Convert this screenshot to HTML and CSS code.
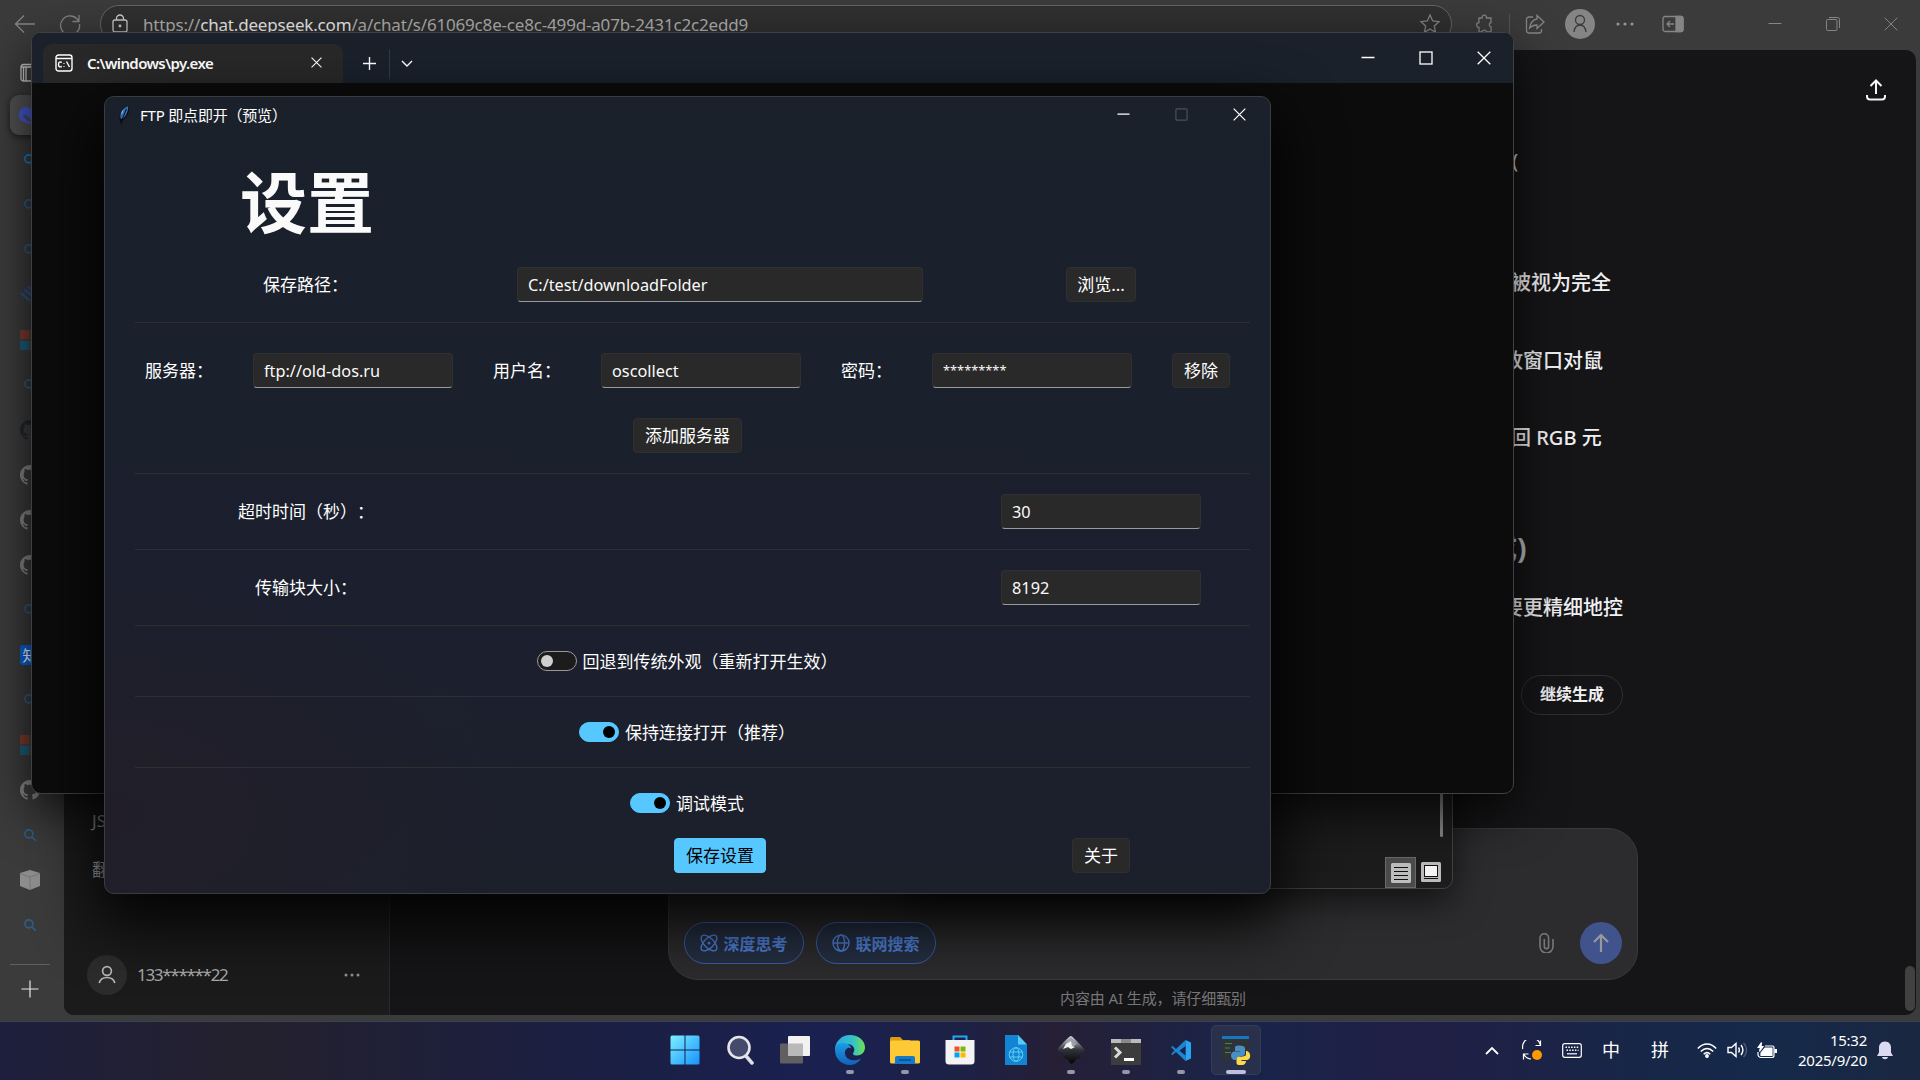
FILE: index.html
```html
<!DOCTYPE html>
<html lang="zh-CN">
<head>
    <meta charset="UTF-8">
    <title>FTP 即点即开（预览）</title>
    <link rel="stylesheet" href="styles.css">
</head>
<body>
    <!-- shared icons -->
    <svg class="defs">
        <symbol id="search" viewBox="0 0 16 16"><circle cx="6.7" cy="6.7" r="4.6"/><path d="M10 10l4.6 4.6"/></symbol>
        <symbol id="github" viewBox="0 0 16 16"><path d="M8 0C3.58 0 0 3.58 0 8c0 3.54 2.29 6.53 5.47 7.59.4.07.55-.17.55-.38 0-.19-.01-.82-.01-1.49-2.01.37-2.53-.49-2.69-.94-.09-.23-.48-.94-.82-1.13-.28-.15-.68-.52-.01-.53.63-.01 1.08.58 1.23.82.72 1.21 1.87.87 2.33.66.07-.52.28-.87.51-1.07-1.78-.2-3.64-.89-3.64-3.95 0-.87.31-1.59.82-2.15-.08-.2-.36-1.02.08-2.12 0 0 .67-.21 2.2.82.64-.18 1.32-.27 2-.27s1.36.09 2 .27c1.53-1.04 2.2-.82 2.2-.82.44 1.1.16 1.92.08 2.12.51.56.82 1.27.82 2.15 0 3.07-1.87 3.75-3.65 3.95.29.25.54.73.54 1.48 0 1.07-.01 1.93-.01 2.2 0 .21.15.46.55.38A8 8 0 0 0 16 8c0-4.42-3.58-8-8-8z"/></symbol>
        <symbol id="squares" viewBox="0 0 20 20"><path fill="#7d3a2c" d="M0 0h9.4v9.4H0z"/><path fill="#4e6a2c" d="M10.6 0H20v9.4h-9.4z"/><path fill="#1d5d7a" d="M0 10.6h9.4V20H0z"/><path fill="#8a6a20" d="M10.6 10.6H20V20h-9.4z"/></symbol>
        <symbol id="close" viewBox="0 0 14 14"><path d="M.7.7l12.6 12.6M13.3.7L.7 13.3"/></symbol>
        <symbol id="dash" viewBox="0 0 14 14"><path d="M.5 6.5h13"/></symbol>
        <symbol id="person" viewBox="0 0 20 20"><circle cx="10" cy="6" r="4.4"/><path d="M2.2 18c1-4 4-5.500 7.800-5.500s6.800 1.500 7.800 5.500"/></symbol>
    </svg>

    <div class="desktop">
        <div class="browser">
            <div class="toolbar">
                <svg class="line" width="22" height="20" viewBox="0 0 22 20"><path d="M21 10H1.500M10 1.500L1.500 10l8.500 8.500"/></svg>
                <svg class="line" width="22" height="22" viewBox="0 0 22 22"><path d="M19.500 8A9.500 9.500 0 1 0 20.500 11M20 2v6.500h-6.500"/></svg>
                <div class="address">
                    <svg class="line lock" width="18" height="20" viewBox="0 0 18 20"><rect x="2" y="6" width="14" height="12" rx="2"/><path d="M5.500 6V4.500a3.500 3.500 0 0 1 7 0V6"/><circle cx="9" cy="12" r=".8"/></svg>
                    <span class="url">https://<b>chat.deepseek.com</b>/a/chat/s/61069c8e-ce8c-499d-a07b-2431c2c2edd9</span>
                    <svg class="line star" width="22" height="22" viewBox="0 0 22 22"><path d="M11 2l2.700 6 6.300.700-4.700 4.300 1.300 6.400L11 16l-5.600 3.400L6.700 13 2 8.700 8.300 8z"/></svg>
                </div>
                <svg class="line" width="20" height="20" viewBox="0 0 20 20"><path d="M5 4h3a2.300 2.300 0 1 1 4.500 0H17v4.500a2.200 2.200 0 0 0 0 4.300V18h-4.500a2.300 2.300 0 0 0-4.500 0H5v-4.500a2.400 2.400 0 1 1 0-4.800z"/></svg>
                <i class="divider"></i>
                <svg class="line" width="20" height="20" viewBox="0 0 20 20"><path d="M8 3H4a2.500 2.500 0 0 0-2.500 2.500v11A2.500 2.500 0 0 0 4 19h10a2.500 2.500 0 0 0 2.500-2.500V15M12 1.500L19 8l-7 6.500V11c-3 0-5 .500-7.500 3C5 9.500 8 5.500 12 5z"/></svg>
                <div class="profile"><svg class="line" width="20" height="20" viewBox="0 0 20 20"><circle cx="10" cy="6" r="4.500"/><path d="M4 18c.500-4 2.500-7 6-7s5.500 3 6 7"/></svg></div>
                <svg class="dots" width="18" height="4" viewBox="0 0 18 4"><circle cx="2" cy="2" r="1.600"/><circle cx="9" cy="2" r="1.600"/><circle cx="16" cy="2" r="1.600"/></svg>
                <svg class="line" width="22" height="18" viewBox="0 0 22 18"><rect x="1" y="1.500" width="20" height="15" rx="2"/><path class="solid" d="M14 1.500h5a2 2 0 0 1 2 2v11a2 2 0 0 1-2 2h-5z"/><path d="M12 9H5M8 6L5 9l3 3"/></svg>
                <i></i>
                <svg class="line thin" width="14" height="14"><use href="#dash"/></svg>
                <svg class="line thin" width="14" height="14" viewBox="0 0 14 14"><rect x=".5" y="2.500" width="10.500" height="11" rx="1"/><path d="M3 .500h8.500a2 2 0 0 1 2 2V11"/></svg>
                <svg class="line thin" width="14" height="14"><use href="#close"/></svg>
            </div>

            <div class="page">
                <div class="tabs">
                    <div class="tab first"><svg class="line panes" width="20" height="20" viewBox="0 0 20 20"><rect x="1" y="1.500" width="18" height="16.500" rx="2.500"/><path d="M6 4v14M1 4h18M3.500 4v14"/></svg></div>
                    <div class="tab active"><svg width="22" height="20" viewBox="0 0 22 20"><path fill="#4158d6" d="M0 10c0-5 3-8 7-8 2 0 3 1 4 2V2c3 2 4 4 6 4 1-2 3-1 5-2-1 4-3 5-4 8-2 6-8 8-12 5-4 0-6-3-6-7z"/><path fill="#4b4b55" d="M4 10c3-1 5 1 6.500 3.500 1 1.500 2 2 3 2.500-4 1-6.500-.500-8-3C5 12 4 11 4 10z"/></svg></div>
                    <div class="tab"><svg class="find bright" width="14" height="14"><use href="#search"/></svg></div>
                    <div class="tab"><svg class="find" width="14" height="14"><use href="#search"/></svg></div>
                    <div class="tab"><svg class="find" width="14" height="14"><use href="#search"/></svg></div>
                    <div class="tab"><svg class="find stripes" width="20" height="20" viewBox="0 0 20 20"><path d="M1 8l9 8M4.500 4.500l9 8M8 1.500l8 7"/></svg></div>
                    <div class="tab"><svg width="20" height="20"><use href="#squares"/></svg></div>
                    <div class="tab"><svg class="find" width="14" height="14"><use href="#search"/></svg></div>
                    <div class="tab"><svg class="cat dark" width="20" height="20"><use href="#github"/></svg></div>
                    <div class="tab"><svg class="cat" width="20" height="20"><use href="#github"/></svg></div>
                    <div class="tab"><svg class="cat" width="20" height="20"><use href="#github"/></svg></div>
                    <div class="tab"><svg class="cat" width="20" height="20"><use href="#github"/></svg></div>
                    <div class="tab"><svg class="find" width="14" height="14"><use href="#search"/></svg></div>
                    <div class="tab"><span class="zhihu">知</span></div>
                    <div class="tab"><svg class="find" width="14" height="14"><use href="#search"/></svg></div>
                    <div class="tab"><svg width="20" height="20"><use href="#squares"/></svg></div>
                    <div class="tab"><svg class="cat" width="20" height="20"><use href="#github"/></svg></div>
                    <div class="tab"><svg class="find" width="14" height="14"><use href="#search"/></svg></div>
                    <div class="tab"><svg width="20" height="20" viewBox="0 0 20 20"><path fill="#8d8d8d" d="M10 0l10 3v13l-10 4L0 16V3z"/><path d="M0 3.500l10 3.500 10-3.500M10 7v13" fill="none" stroke="#777"/></svg></div>
                    <div class="tab"><svg class="find" width="14" height="14"><use href="#search"/></svg></div>
                    <div class="new-tab"><svg width="18" height="18" viewBox="0 0 18 18"><path d="M9 .500v17M.500 9h17" stroke="#e8e8e8" stroke-width="1.200"/></svg></div>
                </div>

                <div class="site">
                    <div class="history">
                        <p>JSON</p>
                        <p>翻译</p>
                        <div class="account">
                            <span class="avatar"><svg class="line" width="20" height="20"><use href="#person"/></svg></span>
                            <span class="phone">133******22</span>
                            <svg class="dots" width="16" height="4" viewBox="0 0 16 4"><circle cx="2" cy="2" r="1.500"/><circle cx="8" cy="2" r="1.500"/><circle cx="14" cy="2" r="1.500"/></svg>
                        </div>
                    </div>
                    <div class="chat">
                        <svg class="upload" width="20" height="22" viewBox="0 0 20 22"><path d="M10 15V2M4.500 7L10 1.500 15.500 7M1 16v1.500a3 3 0 0 0 3 3h12a3 3 0 0 0 3-3V16"/></svg>
                        <div class="messages">
                            <p class="m1">(</p>
                            <p class="m2">被视为完全</p>
                            <p>放窗口对鼠</p>
                            <p class="m2">回 RGB 元</p>
                            <h3>成)</h3>
                            <p>要更精细地控</p>
                            <span class="continue">继续生成</span>
                        </div>
                        <div class="prompt">
                            <span class="pill"><svg width="18" height="18" viewBox="0 0 18 18"><ellipse cx="9" cy="9" rx="10" ry="4.800" transform="rotate(45 9 9)"/><ellipse cx="9" cy="9" rx="10" ry="4.800" transform="rotate(-45 9 9)"/><circle cx="9" cy="9" r=".8"/></svg>深度思考</span>
                            <span class="pill"><svg width="18" height="18" viewBox="0 0 18 18"><circle cx="9" cy="9" r="8"/><ellipse cx="9" cy="9" rx="3.600" ry="8"/><path d="M1 9h16"/></svg>联网搜索</span>
                            <svg class="clip" width="16" height="20" viewBox="0 0 16 20"><path d="M15 6v7.500a6.500 6.500 0 0 1-13 0V5a4.300 4.300 0 0 1 8.600 0v8.500a2.100 2.100 0 0 1-4.300 0V6"/></svg>
                            <span class="send"><svg width="18" height="20" viewBox="0 0 18 20"><path d="M9 19V2M2 9l7-7 7 7"/></svg></span>
                        </div>
                        <p class="note">内容由 AI 生成，请仔细甄别</p>
                        <i class="scrollbar"></i>
                    </div>
                </div>
            </div>
        </div>

        <!-- file manager behind the console -->
        <div class="window explorer">
            <i class="thumb"></i>
            <div class="views">
                <span class="view on"><svg width="20" height="20" viewBox="0 0 20 20"><rect width="20" height="20" rx="1.500" fill="#bdbdbd"/><path d="M3 4.500h14M3 8.500h14M3 12.500h14M3 16.500h14" stroke="#111"/></svg></span>
                <span class="view"><svg width="20" height="20" viewBox="0 0 20 20"><rect width="20" height="20" rx="1.500" fill="#bdb8bb"/><rect x="3.500" y="3.500" width="13" height="11" fill="#f4f4f4" stroke="#111"/><path d="M3 16.500h14" stroke="#111"/></svg></span>
            </div>
        </div>

        <div class="window console">
            <div class="console-bar">
                <div class="console-tab">
                    <svg width="18" height="18" viewBox="0 0 18 18"><rect x="1" y="1" width="16" height="16" rx="2.500"/><path d="M1 4.500h16M6.800 8.300C4.500 7.300 3.500 8.500 3.500 10.500s1 3 3.300 2M9 9v.8M9 12v.8M11.500 7.500l3 5.500"/></svg>
                    <span>C:\windows\py.exe</span>
                    <svg width="11" height="11"><use href="#close"/></svg>
                </div>
                <svg class="plus" width="13" height="13" viewBox="0 0 13 13"><path d="M6.500 0v13M0 6.500h13"/></svg>
                <i class="divider"></i>
                <svg class="chevron" width="12" height="7" viewBox="0 0 12 7"><path d="M1 1l5 5 5-5"/></svg>
                <div class="controls">
                    <svg width="14" height="14"><use href="#dash"/></svg>
                    <svg width="14" height="14" viewBox="0 0 14 14"><rect x="1" y="1" width="12" height="12"/></svg>
                    <svg width="14" height="14"><use href="#close"/></svg>
                </div>
            </div>
        </div>

        <div class="window settings">
            <div class="title-bar">
                <svg class="feather" width="14" height="20" viewBox="0 0 14 20"><path fill="#0b0d12" d="M4 20L2.500 13C2.500 7 6 2 12 0c1 5-.500 11-6 15z"/><path fill="#386db0" d="M3.500 13.500C2.500 7 6 3 11.300 1 11.500 6 9 11 5.500 14z"/><path d="M9.500 4L5 14.500" stroke="#0b0d12"/><path d="M6 5.500L4.500 9" stroke="#8db4df"/></svg>
                <span>FTP 即点即开（预览）</span>
                <div class="controls">
                    <svg width="13" height="13"><use href="#dash"/></svg>
                    <svg class="disabled" width="13" height="13" viewBox="0 0 14 14"><rect x="1" y="1" width="12" height="12" rx="1"/></svg>
                    <svg width="13" height="13"><use href="#close"/></svg>
                </div>
            </div>
            <div class="form">
                <h1>设置</h1>
                <div class="row path">
                    <label>保存路径：</label>
                    <input class="wide" type="text" value="C:/test/downloadFolder">
                    <button>浏览...</button>
                </div>
                <div class="row servers">
                    <div class="server">
                        <label>服务器：</label>
                        <input type="text" value="ftp://old-dos.ru">
                        <label>用户名：</label>
                        <input type="text" value="oscollect">
                        <label>密码：</label>
                        <input class="stars" type="text" value="*********">
                        <button>移除</button>
                    </div>
                    <button class="add">添加服务器</button>
                </div>
                <div class="row number">
                    <label>超时时间（秒）：</label>
                    <input type="text" value="30">
                </div>
                <div class="row number">
                    <label>传输块大小：</label>
                    <input type="text" value="8192">
                </div>
                <div class="row check"><i class="switch"></i><label>回退到传统外观（重新打开生效）</label></div>
                <div class="row check"><i class="switch on"></i><label>保持连接打开（推荐）</label></div>
                <div class="row check last"><i class="switch on"></i><label>调试模式</label></div>
                <div class="actions">
                    <button class="primary">保存设置</button>
                    <button>关于</button>
                </div>
            </div>
        </div>

        <div class="taskbar">
            <div class="apps">
                <div class="app"><svg width="30" height="30" viewBox="0 0 30 30"><defs><linearGradient id="win" x2="1" y2="1"><stop stop-color="#7df0ff"/><stop offset="1" stop-color="#1593ff"/></linearGradient></defs><path fill="url(#win)" d="M2 .500h12.500v14H.500V2A1.500 1.500 0 0 1 2 .500zM15.500 .500H28A1.500 1.500 0 0 1 29.500 2v12.500h-14zM.500 15.500h14v14H2A1.500 1.500 0 0 1 .500 28zM15.500 15.500h14V28a1.500 1.500 0 0 1-1.500 1.500H15.500z"/></svg></div>
                <div class="app"><svg width="30" height="30" viewBox="0 0 30 30"><circle cx="14" cy="12.500" r="10.500" fill="#454a6c" stroke="#e6e6ea" stroke-width="2.600"/><path d="M21 21l6 7" stroke="#e0e0e4" stroke-width="3.500" stroke-linecap="round"/></svg></div>
                <div class="app"><svg width="30" height="30" viewBox="0 0 30 30"><rect y="8.500" width="23" height="20" rx="1" fill="#606060"/><rect x="8" y="1" width="22" height="20" rx="1" fill="#f2f2f2"/><path d="M8 8.500h15V21H8z" fill="#b9b9b9"/></svg></div>
                <div class="app run"><svg width="30" height="30" viewBox="0 0 30 30"><defs><linearGradient id="eg" x2="1"><stop stop-color="#28a7e8"/><stop offset=".6" stop-color="#35c1c9"/><stop offset="1" stop-color="#6fe24c"/></linearGradient><linearGradient id="eb" x2="0" y2="1"><stop stop-color="#1b9de2"/><stop offset="1" stop-color="#1260b8"/></linearGradient></defs><path fill="url(#eg)" d="M0 15C0 6 7 0 15 0c9 0 15 6 15 12.500 0 5-4 8-8 8s-4.500-1.500-3.500-3c2.500-4-1-8.500-6-8.500C7 9 2 11 0 15z"/><path fill="url(#eb)" d="M0 15c0-5 5-8 11-6.500 3 .800 5 3 5.500 5-3-2-7 .500-6.500 5 .500 6 8 9 16 5C23 28 19 30 15 30 6.500 30 0 23.500 0 15z"/></svg></div>
                <div class="app run"><svg width="30" height="30" viewBox="0 0 30 30"><path fill="#dd9b11" d="M0 3.500A1.500 1.500 0 0 1 1.500 2H10l3 3h7v5H0z"/><rect y="5.500" width="30" height="23" rx="1.500" fill="#fdc934"/><path fill="#1579c8" d="M5 29v-6a2 2 0 0 1 2-2h16a2 2 0 0 1 2 2v6z"/><path d="M9 25h12" stroke="#0a4c8c" stroke-width="1.500"/></svg></div>
                <div class="app"><svg width="30" height="30" viewBox="0 0 30 30"><path d="M8.500 6V1.500h13V6" fill="none" stroke="#22a8f2" stroke-width="2"/><path fill="#f3f3f3" d="M.500 5h29v21a3.500 3.500 0 0 1-3.500 3.500H4A3.500 3.500 0 0 1 .500 26z"/><path fill="#f25022" d="M9.500 11.500h5v5h-5z"/><path fill="#7fba00" d="M15.500 11.500h5v5h-5z"/><path fill="#00a4ef" d="M9.500 17.500h5v5h-5z"/><path fill="#ffb900" d="M15.500 17.500h5v5h-5z"/></svg></div>
                <div class="app"><svg width="30" height="30" viewBox="0 0 30 30"><path fill="#1284d4" d="M4 0h13l9 9.500V30H4z"/><path fill="#56cbf5" d="M17 0l9 9.500h-9z"/><g fill="none" stroke="#62d0f5"><circle cx="15" cy="19.500" r="6.800"/><ellipse cx="15" cy="19.500" rx="3" ry="6.800"/><path d="M8.500 17h13M8.500 22h13"/></g></svg></div>
                <div class="app run"><svg width="30" height="30" viewBox="0 0 30 30"><defs><linearGradient id="ink" x2="0" y2="1"><stop stop-color="#d5d8dd"/><stop offset=".5" stop-color="#30343a"/><stop offset="1" stop-color="#050505"/></linearGradient></defs><path fill="url(#ink)" d="M15 1c1.500 0 12 11.500 13.500 13.500 1 3-5 3-6 5 0 2 3 2 2 3.500-2 1-4 0-5 2-1 2-2 3.500-4 3.500s-2-2.500-4-4-4-1-4.500-2.500c1-1.500 3-1 2-2.500-2-2-7-2-7.500-5C3 12 13 1 15 1z"/><path fill="#9ca0a8" d="M15 2.500l6 6.500-6 4-6-4z"/><path fill="#f1f1f1" d="M10 9l5-3 1 5 3 1-4 2-3-2-5 2z"/></svg></div>
                <div class="app run"><svg width="30" height="30" viewBox="0 0 30 30"><path fill="#3c3c3c" d="M0 7h30v24.500H0z"/><path fill="#bbb" d="M0 4h30v4H0z"/><path fill="#8a8a8a" d="M10 4h10v4H10z"/><path d="M4 12.500l5 5-5 5" fill="none" stroke="#d8d8d8" stroke-width="3"/><path fill="#fff" d="M13 23h10v3H13z"/></svg></div>
                <div class="app run"><svg width="30" height="30" viewBox="0 0 30 30"><path fill="#1d86d2" d="M19.500 5L10 14l-3.500-3L5 12l3.500 3.500L5 19l1.500 1 3.500-3 9.500 9z"/><path fill="#2aa3f0" d="M19.500 5L25 7.500v16L19.500 26z"/><path fill="#1a2049" d="M19.500 11v9.500L13.500 15.700z"/></svg></div>
                <div class="app run current"><svg width="30" height="30" viewBox="0 0 30 30"><path fill="#2f3337" d="M1 1h27v24H1z"/><path fill="#1477c0" d="M1 1h27v3H1z"/><path d="M4 8.500h7M4 13h5M4 17.500h6" stroke="#3e8c45"/><path fill="#4a8fc4" d="M14 12c1-2 9-2 10 1v6c0 3-8 1-9 6h-2c-4-1-4-8 0-8.500h6V16h-5z"/><path fill="#fbd94b" d="M25 16c5 0 5.500 8 1.500 9h-6v1h4.500c0 5.500-9 5.500-9.500 2V24c.500-4 8-1 9.500-4z"/></svg></div>
            </div>
            <div class="tray">
                <svg width="14" height="9" viewBox="0 0 14 9"><path stroke-width="1.800" d="M1 8l6-6 6 6"/></svg>
                <svg width="20" height="20" viewBox="0 0 20 20"><path d="M.800 9A9 9 0 0 1 18.500 5M18.500 .500V5.500h-5M1.500 19.500V14h5M2 14.500A9 9 0 0 0 9 19"/><circle cx="15" cy="15" r="5" fill="#f90" stroke="none"/></svg>
                <svg width="20" height="15" viewBox="0 0 20 15"><rect x=".700" y=".700" width="18.600" height="13.600" rx="2"/><path stroke-dasharray="1.500 1.300" stroke-width="1.500" d="M3.500 4.300h13M4.500 7.300h12"/><path d="M5 10.800h10"/></svg>
                <span class="ime">中</span>
                <span class="ime">拼</span>
                <svg width="20" height="15" viewBox="0 0 20 15"><path stroke-width="1.500" d="M.800 5.500c5.500-6 13-6 18.400 0M3.800 8.500c4-4 8.500-4 12.400 0M6.700 11.300c2-2 4.600-2 6.600 0"/><circle cx="10" cy="13" r="1.300" fill="#fff"/></svg>
                <svg width="20" height="16" viewBox="0 0 20 16"><path stroke-width="1.400" d="M1 5.500h3.500L9 1.500v13l-4.500-4H1zM11.500 5.500c1 1.500 1 3.500 0 5M14 3c2.300 3 2.300 7 0 10"/><path stroke="#56607a" d="M16.500 1c4 4 4 10 0 14"/></svg>
                <svg width="20" height="17" viewBox="0 0 20 17"><path d="M8 4h7.500A1.500 1.500 0 0 1 17 5.500v8a2 2 0 0 1-2 2H4a3 3 0 0 1-3-3V10"/><path fill="#fff" d="M8 6h7v7.500H4V11zM4.500 .500L1 5.500h2.500L2.500 9.500 6 4.500H4zM18 7.500h1.500v3H18z"/></svg>
                <div class="clock">15:32<br>2025/9/20</div>
                <svg class="bell" width="16" height="19" viewBox="0 0 16 19"><path d="M8 .500c4 0 6 3 6 6v5l2 3.500H0l2-3.500v-5c0-3 2-6 6-6zM5 16h6c-.500 3-5.500 3-6 0z"/></svg>
            </div>
        </div>
    </div>
</body>
</html>
```

FILE: styles.css
```css
*{
    box-sizing: border-box;
}
body{
    margin: 0;
    overflow: hidden;
    background: #151517;
    color: #fff;
    font-family: "Noto Sans", "Noto Sans CJK SC", sans-serif;
    text-spacing-trim: space-all;
}
p, h1, h3{
    margin: 0;
}
svg{
    fill: none;
    flex-shrink: 0;
}
.defs{
    display: none;
}
.desktop{
    position: relative;
    width: 1920px;
    height: 1080px;
    display: flex;
    flex-direction: column;
}

/* browser */
.browser{
    height: 1021px;
    background: #3b3b3b;
    display: flex;
    flex-direction: column;
}
.toolbar{
    height: 50px;
    padding-bottom: 2px;
    display: grid;
    grid-template-columns: 50px 40px 10px 1352px 7px 50px 1px 50px 40px 50px 46px 50px 58px 58px 58px;
    align-items: center;
    justify-items: center;
}
.toolbar .address{
    grid-column: 4;
}
.toolbar .address + svg{
    grid-column: 6;
}
.line{
    stroke: #858585;
    stroke-width: 1.3;
}
.line.thin{
    stroke-width: 1;
}
.line .solid{
    fill: #858585;
}
.dots{
    fill: #929292;
}
.address{
    width: 100%;
    height: 38px;
    align-self: start;
    margin-top: 5px;
    padding: 0 10px;
    border: 1px solid #656565;
    border-radius: 19px;
    background: #303030;
    display: flex;
    align-items: center;
    font-size: 17px;
}
.lock{
    stroke: #ccc;
}
.url{
    margin-left: 14px;
    color: #b1b1b1;
    letter-spacing: -.18px;
    white-space: nowrap;
}
.url b{
    font-weight: 400;
    color: #eee;
}
.star{
    margin-left: auto;
}
.toolbar .divider{
    width: 1px;
    height: 20px;
    background: #555;
}
.profile{
    width: 30px;
    height: 30px;
    border-radius: 50%;
    background: #858585;
    display: flex;
    align-items: center;
    justify-content: center;
}
.profile .line{
    stroke: #3c3c3c;
}
.page{
    flex: 1;
    display: flex;
    padding: 0 4px 6px 0;
}
.tabs{
    width: 64px;
    display: flex;
    flex-direction: column;
}
.tab{
    width: 60px;
    height: 45px;
    display: flex;
    align-items: center;
    justify-content: center;
}
.tab.first{
    height: 42px;
    padding-top: 3px;
}
.tab.active{
    position: relative;
    z-index: 0;
}
.tab.active::before{
    content: "";
    position: absolute;
    z-index: -1;
    inset: 3px 0 2px 10px;
    border-radius: 9px;
    background: #515151;
    box-shadow: 0 2px 6px #0008;
}
.panes{
    stroke: #c8c8c8;
}
.find{
    stroke: #2a5f8c;
    stroke-width: 1.8;
}
.find.bright{
    stroke: #1383dc;
}
.stripes{
    stroke: #2c5184;
    stroke-width: 2.5;
}
.cat{
    fill: #858585;
}
.cat.dark{
    fill: #22272d;
}
.zhihu{
    width: 20px;
    height: 20px;
    border-radius: 3px;
    background: #0961d8;
    text-align: center;
    font-size: 15px;
    line-height: 20px;
}
.new-tab{
    width: 40px;
    height: 50px;
    margin: 17px 0 0 10px;
    border-top: 1px solid #606060;
    text-align: center;
    line-height: 44px;
}
.new-tab svg{
    vertical-align: middle;
}
.site{
    flex: 1;
    display: flex;
    border-radius: 0 10px 10px 10px;
    overflow: hidden;
    background: #151517;
}
.history{
    width: 326px;
    padding: 747px 29px 0 28px;
    background: #1b1b1c;
    border-right: 1px solid #2a2a2c;
    font-size: 17px;
    line-height: 48px;
    color: #aaa;
}
.history p + p{
    margin-top: 1px;
}
.account{
    display: flex;
    align-items: center;
    margin: 61px 0 0 -5px;
    line-height: 40px;
}
.account .line{
    stroke: #b7b7b7;
    stroke-width: 1.7;
}
.avatar{
    width: 40px;
    height: 40px;
    margin-right: 10px;
    border-radius: 50%;
    background: #2c2c2d;
    display: flex;
    align-items: center;
    justify-content: center;
}
.phone{
    flex: 1;
    letter-spacing: -1.3px;
}
.chat{
    flex: 1;
    position: relative;
    display: flex;
    flex-direction: column;
    align-items: center;
}
.upload{
    position: absolute;
    top: 29px;
    right: 30px;
    stroke: #f4f4f4;
    stroke-width: 2;
}
.messages{
    align-self: stretch;
    height: 778px;
    padding: 97px 0 0 1113px;
    font-size: 20px;
    font-weight: 500;
    line-height: 28px;
    color: #f0f0f2;
}
.messages .m1{
    padding-left: 9px;
    margin-bottom: 94px;
    color: #ccc;
}
.messages p{
    margin-bottom: 49px;
}
.messages .m2{
    padding-left: 8px;
    margin-bottom: 50px;
}
.messages h3{
    margin: 79px 0 29px -14px;
    font-size: 28px;
    line-height: 34px;
    color: #bbb;
}
.continue{
    display: block;
    width: 102px;
    height: 40px;
    margin: 53px 0 0 18px;
    border: 1px solid #303032;
    border-radius: 20px;
    text-align: center;
    font-size: 16px;
    font-weight: 600;
    line-height: 37px;
}
.prompt{
    width: 970px;
    height: 152px;
    padding: 0 15px 15px;
    border: 1px solid #3a3a3c;
    border-radius: 30px;
    background: #2c2c2e;
    display: flex;
    align-items: flex-end;
}
.pill{
    width: 120px;
    height: 42px;
    margin-right: 12px;
    border: 1px solid #3d5fa8;
    border-radius: 21px;
    background: #252f42;
    color: #5081d8;
    font-size: 16px;
    font-weight: 600;
    display: flex;
    gap: 5px;
    align-items: center;
    justify-content: center;
}
.pill svg{
    stroke: #5081d8;
    stroke-width: 1.4;
}
.clip{
    margin: 0 26px 11px auto;
    stroke: #777;
    stroke-width: 1.6;
}
.send{
    width: 42px;
    height: 42px;
    border-radius: 50%;
    background: #40538c;
    stroke: #999;
    stroke-width: 2.2;
    display: flex;
    align-items: center;
    justify-content: center;
}
.note{
    margin-top: 7px;
    font-size: 15px;
    line-height: 22px;
    letter-spacing: -.1px;
    color: #777779;
}
.scrollbar{
    position: absolute;
    right: 1px;
    bottom: 4px;
    width: 10px;
    height: 45px;
    border-radius: 5px;
    background: #414141;
}

/* floating windows */
.window{
    position: absolute;
    overflow: hidden;
    border: 1px solid #3f4144;
    border-radius: 10px;
}
.explorer{
    left: 900px;
    top: 600px;
    width: 553px;
    height: 289px;
    background: #1c1c1c;
    box-shadow: 0 12px 35px #0009;
}
.thumb{
    position: absolute;
    right: 9px;
    top: 150px;
    width: 3px;
    height: 86px;
    border-radius: 2px;
    background: #888;
}
.views{
    position: absolute;
    right: 6px;
    bottom: 0;
    display: flex;
}
.view{
    width: 31px;
    height: 31px;
    display: flex;
    align-items: center;
    justify-content: center;
}
.view + .view{
    margin-left: -1px;
    padding-bottom: 1px;
}
.view.on{
    background: #4b4b4b;
    border: 1px solid #6a6a6a;
}
.console{
    left: 31px;
    top: 32px;
    width: 1483px;
    height: 762px;
    background: #0c0c0c;
    box-shadow: 0 18px 50px #000b;
}
.console-bar{
    height: 50px;
    background: #1a212b;
    display: flex;
    align-items: center;
    stroke: #fff;
    stroke-width: 1.4;
}
.console-tab{
    width: 300px;
    height: 39px;
    margin: 11px 0 0 11px;
    padding: 0 21px 2px 12px;
    border-radius: 9px 9px 0 0;
    background: #282828;
    display: flex;
    align-items: center;
    font-size: 15px;
    font-weight: 600;
}
.console-tab span{
    flex: 1;
    margin-left: 14px;
    letter-spacing: -.6px;
}
.plus{
    margin: 10px 13px 0 20px;
}
.console-bar .divider{
    width: 1px;
    height: 30px;
    margin-top: 11px;
    background: #343a44;
}
.chevron{
    margin: 11px 0 0 11px;
}
.controls{
    margin-left: auto;
    display: flex;
    gap: 44px;
    stroke: #fff;
    stroke-width: 1.3;
}
.console .controls{
    margin: 0 22px 1px auto;
}
.settings{
    left: 104px;
    top: 96px;
    width: 1167px;
    height: 798px;
    border-color: #3a3c40;
    background: radial-gradient(ellipse 420px 260px at 0 90%, #211e29, #211e2900), linear-gradient(#1b212b, #1a202c 30%, #1c1f2e 65%, #1c202b);
    box-shadow: 0 24px 60px 8px #000d;
}
.title-bar{
    height: 36px;
    padding: 0 24px 0 12px;
    display: flex;
    align-items: center;
    font-size: 15px;
}
.title-bar span{
    margin-left: 9px;
    padding-bottom: 2px;
    letter-spacing: -.2px;
}
.title-bar .controls{
    gap: 45px;
    padding-bottom: 1px;
}
.disabled{
    stroke: #4a505b;
}
.form{
    padding: 0 20px 0 30px;
    font-size: 17px;
}
h1{
    height: 134px;
    padding: 19px 0 0 105px;
    font-size: 67px;
    line-height: 100px;
    color: #fafafa;
}
.row{
    display: flex;
    align-items: center;
    border-bottom: 1px solid #2f2f31;
}
label{
    padding-bottom: 2px;
}
input{
    width: 200px;
    height: 35px;
    padding: 0 10px;
    border: 1px solid #303030;
    border-bottom-color: #9a9a9a;
    border-radius: 4px;
    outline: none;
    background: #292929;
    color: #fafafa;
    font: inherit;
    font-size: 16.3px;
}
button{
    height: 35px;
    padding: 0 0 2px;
    width: 58px;
    border: 1px solid #303030;
    border-radius: 4px;
    background: #292929;
    color: #fff;
    font: inherit;
}
.path{
    height: 56px;
    padding: 0 0 20px 128px;
}
.path .wide{
    width: 406px;
    margin: 0 143px 0 169px;
}
.path button{
    width: 70px;
}
.servers{
    height: 151px;
    padding: 30px 0 20px 10px;
    flex-direction: column;
    align-items: flex-start;
    justify-content: space-between;
}
.server{
    display: flex;
    align-items: center;
    gap: 40px;
}
.servers .add{
    width: 109px;
    margin-left: 488px;
}
.stars{
    padding-bottom: 2px;
    font-size: 12.8px;
}
.number{
    height: 76px;
    padding: 0 49px 0 103px;
    justify-content: space-between;
}
.number + .number{
    padding-left: 120px;
}
.check{
    height: 71px;
    justify-content: center;
    padding-right: 11px;
    gap: 6px;
}
.check.last{
    height: 70px;
    border: 0;
}
.switch{
    width: 40px;
    height: 20px;
    padding: 3px;
    border: 1px solid #999;
    border-radius: 10px;
    background: #1c1c1c;
}
.switch::before{
    content: "";
    display: block;
    width: 12px;
    height: 12px;
    border-radius: 50%;
    background: #cfcfcf;
}
.switch.on{
    border-color: #57c8ff;
    background: #57c8ff;
}
.switch.on::before{
    margin-left: auto;
    background: #000;
}
.actions{
    display: flex;
    padding-left: 539px;
    gap: 306px;
}
.actions .primary{
    width: 92px;
    border-color: #57c8ff;
    background: #57c8ff;
    color: #000;
}

/* taskbar */
.taskbar{
    height: 59px;
    padding-bottom: 2px;
    border-top: 1px solid #3a4054;
    background: linear-gradient(90deg, #1e1f3d, #24212e 13%, #1b1f42 30%, #1a2150 43%, #1c2145 50%, #261f36 55%, #19244a 65%, #211f45 74%, #172647 85%, #15294a 92%, #1a2740);
    display: flex;
    align-items: center;
}
.apps{
    display: flex;
    gap: 5.1px;
    margin-left: 660px;
}
.app{
    position: relative;
    width: 50px;
    height: 50px;
    display: flex;
    align-items: center;
    justify-content: center;
}
.run::after{
    content: "";
    position: absolute;
    bottom: 1px;
    width: 8px;
    height: 4px;
    border-radius: 2px;
    background: #9596a8;
}
.current{
    border: 1px solid #343d57;
    border-radius: 5px;
    background: #28304b;
}
.current::after{
    bottom: 0;
    width: 20px;
    background: #c0bde2;
}
.tray{
    margin-left: auto;
    padding-right: 27px;
    display: flex;
    align-items: center;
    stroke: #fff;
    stroke-width: 1.2;
}
.tray > svg + svg{
    margin-left: 20px;
}
.tray > svg:nth-child(2){
    margin-left: 23px;
}
.ime{
    margin-left: 20px;
    font-size: 18px;
    line-height: 20px;
}
.ime + .ime{
    margin: 0 28px 0 31px;
}
.tray .ime + svg + svg, .tray .ime + svg + svg + svg{
    margin-left: 10px;
}
.clock{
    width: 90px;
    text-align: right;
    font-size: 15px;
    line-height: 20px;
    letter-spacing: -.25px;
}
.tray .bell{
    margin-left: 10px;
    fill: #dcdaf0;
    stroke: none;
}
```
